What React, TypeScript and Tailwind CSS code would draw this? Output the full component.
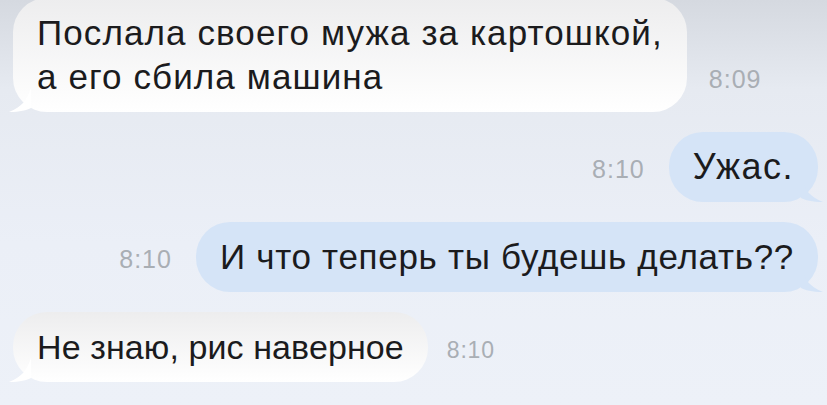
import React from 'react'

type Msg = {
  text: React.ReactNode
  time: string
  out: boolean
  size: string
}

const messages: Msg[] = [
  {
    text: (
      <>
        Послала своего мужа за картошкой,
        <br />а его сбила машина
      </>
    ),
    time: '8:09',
    out: false,
    size: 'text-[35px] tracking-[1.1px]',
  },
  { text: 'Ужас.', time: '8:10', out: true, size: 'text-[36px] tracking-[1.5px]' },
  {
    text: 'И что теперь ты будешь делать??',
    time: '8:10',
    out: true,
    size: 'text-[35px] tracking-[0.7px]',
  },
  {
    text: 'Не знаю, рис наверное',
    time: '8:10',
    out: false,
    size: 'text-[34px] tracking-[0.1px]',
  },
]

function Tail({ out }: { out: boolean }) {
  if (out) {
    return (
      <svg
        className="absolute -right-[5px] bottom-0"
        width="22"
        height="24"
        viewBox="0 0 22 24"
      >
        <path d="M0 0 C4 12 9 19 22 24 C11 24 4 22 0 20 Z" fill="#d5e4f7" />
      </svg>
    )
  }
  return (
    <svg
      className="absolute -left-[4px] bottom-0"
      width="22"
      height="24"
      viewBox="0 0 22 24"
    >
      <path d="M22 0 C18 12 13 19 0 24 C11 24 18 22 22 20 Z" fill="#ffffff" />
    </svg>
  )
}

function Time({ value, small }: { value: string; small?: boolean }) {
  return (
    <span
      className={`mb-[20px] leading-none text-[#a9aeb4] ${
        small ? 'text-[23px] tracking-[0.8px]' : 'text-[25px] tracking-[1px]'
      }`}
    >
      {value}
    </span>
  )
}

export default function App() {
  return (
    <div
      className="w-[827px] h-[405px] overflow-hidden bg-[linear-gradient(180deg,#d5d9e0_0%,#e6eaf1_22%,#ebeff7_60%,#edf1f8_100%)] pl-[13px] pr-[9px] flex flex-col gap-[20px]"
      style={{ fontFamily: '"Liberation Sans", Arial, sans-serif' }}
    >
      {messages.map((m, i) =>
        m.out ? (
          <div key={i} className="flex items-end justify-end gap-[24px]">
            <Time value={m.time} />
            <div
              className={`relative bg-[#d5e4f7] rounded-[34px] px-[24px] py-[13px] leading-[44px] text-[#1b1b1d] ${m.size}`}
            >
              <Tail out />
              <span className="relative">{m.text}</span>
            </div>
          </div>
        ) : (
          <div
            key={i}
            className={
              i === 0
                ? 'flex items-end gap-[22px] -mt-[2px]'
                : 'flex items-end gap-[19px]'
            }
          >
            <div
              className={`relative bg-gradient-to-b from-[#ededee] to-white rounded-[34px] px-[24px] py-[13px] leading-[44px] text-[#1b1b1d] ${m.size}`}
            >
              <Tail out={false} />
              <span className="relative">{m.text}</span>
            </div>
            <Time value={m.time} small={i === 3} />
          </div>
        )
      )}
    </div>
  )
}
